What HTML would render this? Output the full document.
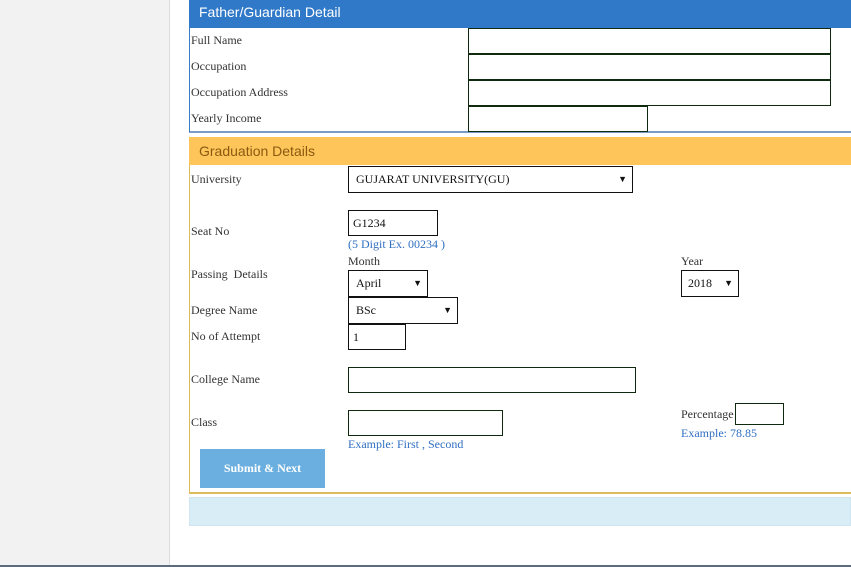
<!DOCTYPE html>
<html><head><style>
*{margin:0;padding:0;box-sizing:border-box}
body{width:851px;height:567px;overflow:hidden;background:#fff;position:relative;font-family:"Liberation Serif",serif;font-size:12px;color:#333}
.a{position:absolute}
.l{position:absolute;left:191px;font-size:12px;color:#333}
.in{position:absolute;border:1px solid #0f2a0f;background:#fff}
.in2{position:absolute;border:1px solid #111;background:#fff;font-size:12px;color:#111;padding-left:7px;line-height:24px}
.sel::after{content:"▼";position:absolute;right:5px;top:0;font-size:9px}
.blue{color:#2f6fc1}
</style></head><body>
<div class="a" style="left:0;top:0;width:170px;height:567px;background:#f2f2f2;border-right:1px solid #ddd"></div>
<div class="a" style="left:189px;top:0;width:662px;height:133px;border-left:1px solid #3a7cc8;border-bottom:2px solid #7a9cc4"></div>
<div class="a" style="left:189px;top:0;width:662px;height:28px;background:#3079c8;color:#fff;font-family:'Liberation Sans',sans-serif;font-size:14px;line-height:25px;padding-left:10px">Father/Guardian Detail</div>
<div class="l" style="top:33px">Full Name</div>
<div class="l" style="top:59px">Occupation</div>
<div class="l" style="top:85px">Occupation Address</div>
<div class="l" style="top:111px">Yearly Income</div>
<div class="in" style="left:468px;top:28px;width:363px;height:26px"></div>
<div class="in" style="left:468px;top:54px;width:363px;height:26px"></div>
<div class="in" style="left:468px;top:80px;width:363px;height:26px"></div>
<div class="in" style="left:468px;top:106px;width:180px;height:26px"></div>

<div class="a" style="left:189px;top:137px;width:664px;height:357px;border:1px solid #dcbc5a;border-bottom:2px solid #dcbc5a;border-right:none"></div>
<div class="a" style="left:189px;top:137px;width:662px;height:28px;background:#fec55a;color:#8a5a10;font-family:'Liberation Sans',sans-serif;font-size:14px;line-height:28px;padding-left:10px">Graduation Details</div>
<div class="l" style="top:172px">University</div>
<div class="in2 sel" style="left:348px;top:166px;width:285px;height:27px">GUJARAT UNIVERSITY(GU)</div>
<div class="l" style="top:224px">Seat No</div>
<div class="in2" style="left:348px;top:210px;width:90px;height:26px;line-height:24px;padding-left:4px">G1234</div>
<div class="a blue" style="left:348px;top:237px">(5 Digit Ex. 00234 )</div>
<div class="a" style="left:348px;top:254px">Month</div>
<div class="a" style="left:681px;top:254px">Year</div>
<div class="l" style="top:267px">Passing &nbsp;Details</div>
<div class="in2 sel" style="left:348px;top:270px;width:80px;height:27px">April</div>
<div class="in2 sel" style="left:681px;top:270px;width:58px;height:27px;padding-left:6px">2018</div>
<div class="l" style="top:303px">Degree Name</div>
<div class="in2 sel" style="left:348px;top:297px;width:110px;height:27px">BSc</div>
<div class="l" style="top:329px">No of Attempt</div>
<div class="in2" style="left:348px;top:324px;width:58px;height:26px;padding-left:4px">1</div>
<div class="l" style="top:372px">College Name</div>
<div class="in" style="left:348px;top:367px;width:288px;height:26px"></div>
<div class="l" style="top:415px">Class</div>
<div class="in" style="left:348px;top:410px;width:155px;height:26px"></div>
<div class="a blue" style="left:348px;top:437px">Example: First , Second</div>
<div class="a" style="left:681px;top:407px">Percentage</div>
<div class="in" style="left:735px;top:403px;width:49px;height:22px"></div>
<div class="a blue" style="left:681px;top:426px">Example: 78.85</div>
<div class="a" style="left:200px;top:449px;width:125px;height:39px;background:#6aafdf;color:#fff;text-align:center;line-height:38px;font-weight:bold;font-size:12px">Submit &amp; Next</div>
<div class="a" style="left:189px;top:497px;width:662px;height:29px;background:#d9edf6;border:1px solid #cfe6f0"></div>
<div class="a" style="left:0;top:565px;width:851px;height:2px;background:#5c6b80"></div>
</body></html>
